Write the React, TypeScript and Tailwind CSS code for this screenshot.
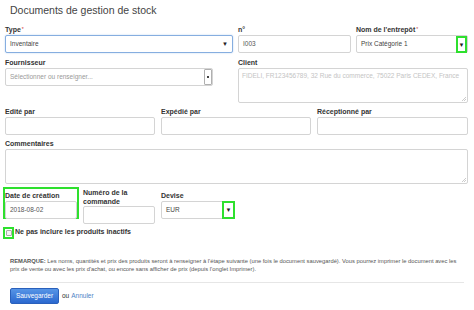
import React from "react";

const Label = ({ children, req }: { children: React.ReactNode; req?: boolean }) => (
  <div className="text-[7px] leading-[9px] font-bold text-[#333] h-[9px] mb-[1px] whitespace-nowrap">
    {children}
    {req && <span className="text-[#c33] font-normal ml-[1px] align-top text-[5px]">*</span>}
  </div>
);

const Input = ({ value, className = "" }: { value?: string; className?: string }) => (
  <div
    className={
      "h-[18px] border border-[#d4d4d4] rounded-[2px] bg-white flex items-center px-[4px] text-[6.5px] text-[#555] " +
      className
    }
  >
    {value}
  </div>
);

const Arrow = () => <span className="text-[6px] text-[#222] leading-none">▼</span>;

const Resize = () => (
  <svg className="absolute right-[1px] bottom-[1px]" width="5" height="5" viewBox="0 0 5 5">
    <path d="M5 1 L1 5 M5 3 L3 5" stroke="#aaa" strokeWidth="0.6" />
  </svg>
);

export default function App() {
  return (
    <div
      className="w-[474px] h-[310px] bg-white overflow-hidden"
      style={{ fontFamily: '"Liberation Sans", Arial, sans-serif' }}
    >
      <div className="pl-[10px] pt-[4px] h-[24px] text-[10.5px] text-[#444] leading-[13px]">
        Documents de gestion de stock
      </div>

      <div className="px-[5px]">
        {/* row 1 */}
        <div className="grid grid-cols-[228px_113px_112px] gap-x-[5px] mt-[1px]">
          <div>
            <Label req>Type</Label>
            <div className="h-[18px] border border-[#86aee0] rounded-[2px] bg-white flex items-center justify-between px-[4px] text-[6.5px] text-[#444] shadow-[0_0_2px_#bcd3f0]">
              <span>Inventaire</span>
              <Arrow />
            </div>
          </div>
          <div>
            <Label>n°</Label>
            <Input value="I003" />
          </div>
          <div>
            <Label req>Nom de l'entrepôt</Label>
            <div className="relative h-[18px] border border-[#d4d4d4] rounded-[2px] bg-white flex items-center px-[4px] text-[6.5px] text-[#444]">
              <span>Prix Catégorie 1</span>
              <div className="absolute right-[0px] top-[0px] w-[11px] h-[17px] border-2 border-[#2ee02e] flex items-center justify-center">
                <Arrow />
              </div>
            </div>
          </div>
        </div>

        {/* row 2 */}
        <div className="grid grid-cols-[228px_230px] gap-x-[5px] mt-[5px]">
          <div>
            <Label>Fournisseur</Label>
            <div className="w-[208px] h-[18px] border border-[#d4d4d4] rounded-[2px] bg-white flex items-center justify-between pl-[4px] text-[6.5px] text-[#999]">
              <span>Sélectionner ou renseigner...</span>
              <div className="w-[8px] h-[16px] border border-[#b0b0b0] rounded-[1px] flex items-center justify-center">
                <span className="block w-[2px] h-[2px] bg-[#444]" />
              </div>
            </div>
          </div>
          <div>
            <Label>Client</Label>
            <div className="relative h-[35px] border border-[#d4d4d4] rounded-[2px] bg-white px-[3px] pt-[2px] text-[6.5px] text-[#c4c4c4] whitespace-nowrap overflow-hidden">
              FIDELI, FR123456789, 32 Rue du commerce, 75022 Paris CEDEX, France
              <Resize />
            </div>
          </div>
        </div>

        {/* row 3 */}
        <div className="grid grid-cols-[150px_150px_151px] gap-x-[6px] mt-[4px]">
          <div>
            <Label>Edité par</Label>
            <Input />
          </div>
          <div>
            <Label>Expédié par</Label>
            <Input />
          </div>
          <div>
            <Label>Réceptionné par</Label>
            <Input />
          </div>
        </div>

        {/* row 4 */}
        <div className="mt-[4px]">
          <Label>Commentaires</Label>
          <div className="relative w-[463px] h-[35px] border border-[#d4d4d4] rounded-[2px] bg-white">
            <Resize />
          </div>
        </div>

        {/* row 5 */}
        <div className="flex items-start gap-x-[6px] mt-[3px] h-[40px]">
          <div className="-ml-[2px] w-[76px] h-[32px] border-2 border-[#2ee02e] px-[0px] pt-[2px]">
            <Label>Date de création</Label>
            <Input value="2018-08-02" className="w-[72px]" />
          </div>
          <div className="w-[72px] -ml-[2px]">
            <div className="text-[7px] leading-[9px] font-bold text-[#333] h-[19px] pt-[1px]">
              Numéro de la
              <br />
              commande
            </div>
            <Input />
          </div>
          <div className="w-[74px] pt-[4px]">
            <Label>Devise</Label>
            <div className="relative h-[18px] border border-[#d4d4d4] rounded-[2px] bg-white flex items-center px-[4px] text-[6.5px] text-[#444]">
              <span>EUR</span>
              <div className="absolute right-[-1px] top-[-1px] w-[13px] h-[18px] border-2 border-[#2ee02e] flex items-center justify-center">
                <Arrow />
              </div>
            </div>
          </div>
        </div>

        {/* checkbox */}
        <div className="flex items-center h-[13px] -ml-[2px] -mt-[1px]">
          <div className="w-[11px] h-[12px] border-2 border-[#2ee02e] flex items-center justify-center">
            <div className="w-[6px] h-[6px] border border-[#aaa] rounded-[1px] bg-[#f4f4f4]" />
          </div>
          <span className="text-[7px] font-bold text-[#333] ml-[1px]">Ne pas inclure les produits inactifs</span>
        </div>
      </div>

      {/* remark */}
      <p className="px-[10px] mt-[18px] text-[5.8px] leading-[8px] text-[#555] pr-[8px]">
        <b>REMARQUE:</b> Les noms, quantités et prix des produits seront à renseigner à l'étape suivante (une fois le document sauvegardé). Vous pourrez imprimer le document avec les prix de vente ou avec les prix d'achat, ou encore sans afficher de prix (depuis l'onglet Imprimer).
      </p>

      <div className="mx-[10px] mt-[9px] border-t border-[#e6e6e6]" />

      <div className="flex items-center px-[10px] mt-[5px]">
        <div className="w-[49px] h-[16px] rounded-[2px] bg-gradient-to-b from-[#5795e6] to-[#2b68cf] border border-[#2a60bb] text-white text-[6.5px] flex items-center justify-center">
          Sauvegarder
        </div>
        <span className="ml-[3px] text-[6.5px] text-[#333]">ou</span>
        <span className="ml-[2px] text-[6.5px] text-[#4f82c6]">Annuler</span>
      </div>
    </div>
  );
}
